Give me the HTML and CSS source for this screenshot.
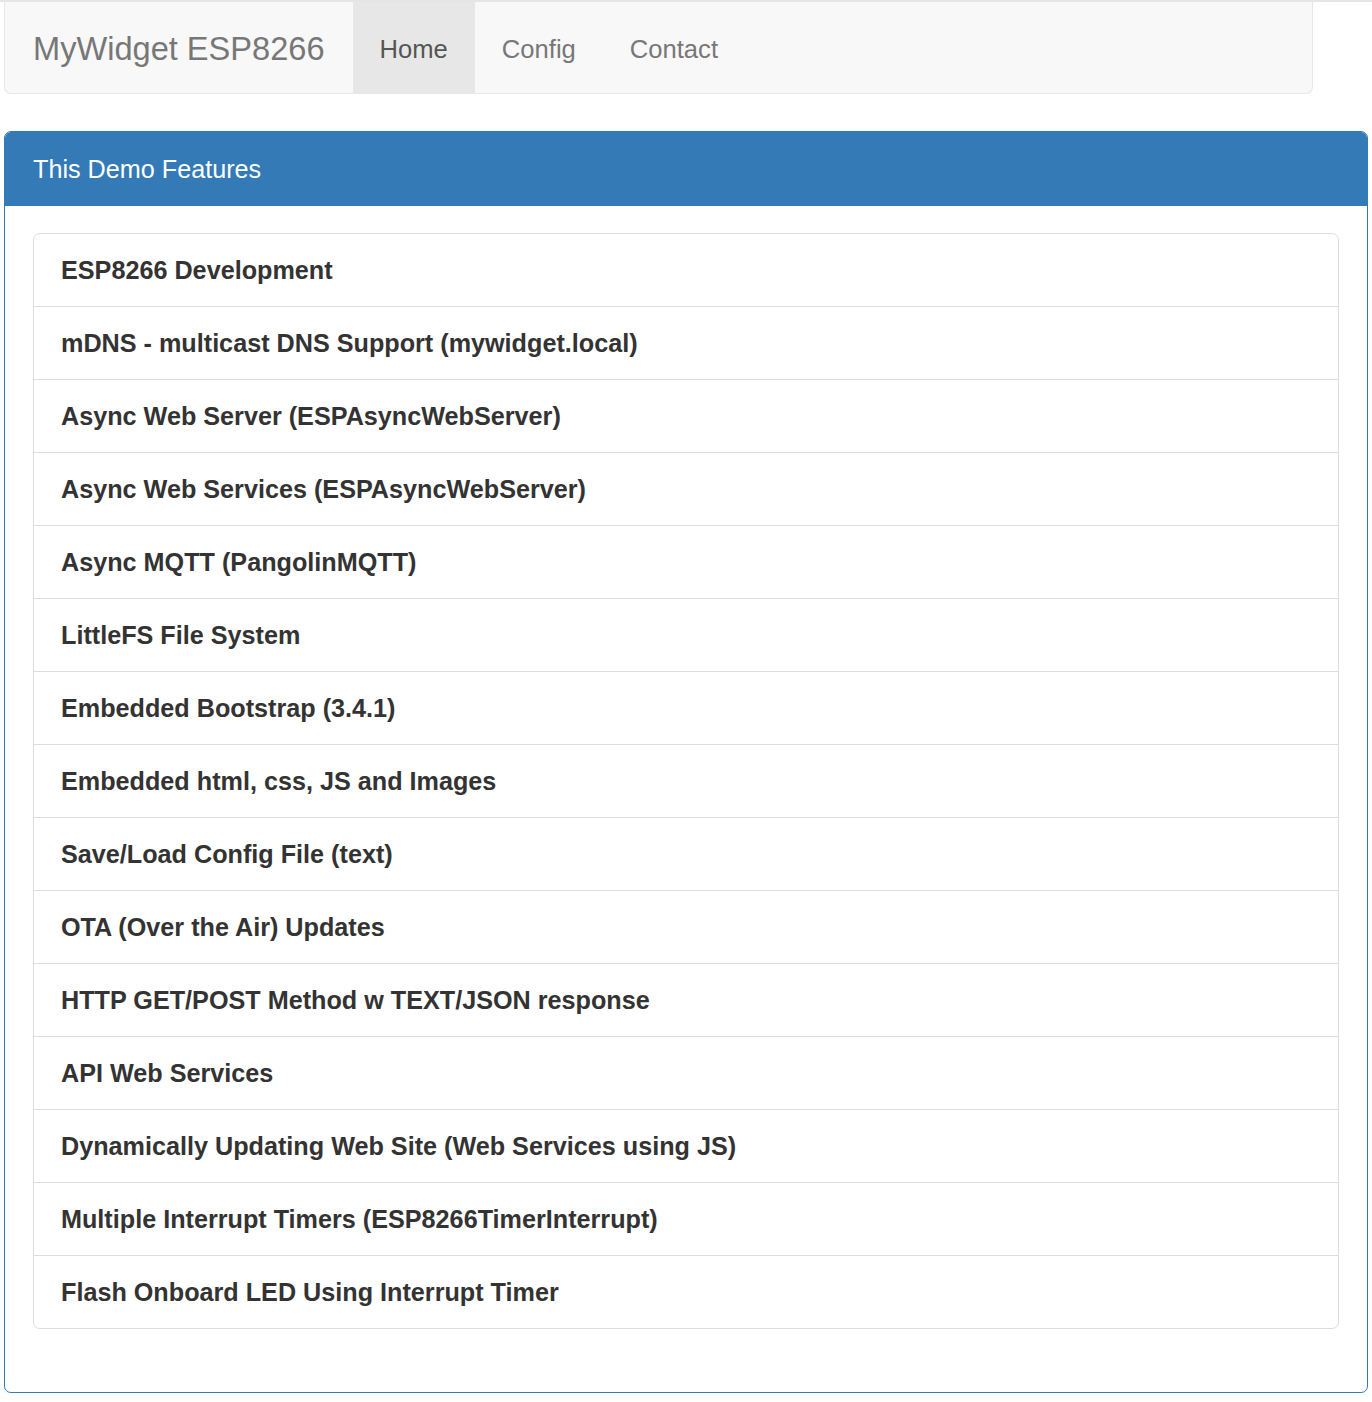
FILE: index.html
```html
<!DOCTYPE html>
<html lang="en">
<head>
<meta charset="utf-8">
<title>MyWidget ESP8266</title>
<link rel="stylesheet" href="styles.css">
</head>
<body>
<div class="topline"></div>
<div class="page">
  <nav class="navbar">
    <a class="brand" href="#">MyWidget ESP8266</a>
    <ul class="nav">
      <li class="active"><a href="#">Home</a></li>
      <li><a href="#">Config</a></li>
      <li><a href="#">Contact</a></li>
    </ul>
  </nav>
  <div class="panel">
    <div class="panel-heading">This Demo Features</div>
    <div class="panel-body">
      <ul class="list-group">
        <li class="list-item">ESP8266 Development</li>
        <li class="list-item">mDNS - multicast DNS Support (mywidget.local)</li>
        <li class="list-item">Async Web Server (ESPAsyncWebServer)</li>
        <li class="list-item">Async Web Services (ESPAsyncWebServer)</li>
        <li class="list-item">Async MQTT (PangolinMQTT)</li>
        <li class="list-item">LittleFS File System</li>
        <li class="list-item">Embedded Bootstrap (3.4.1)</li>
        <li class="list-item">Embedded html, css, JS and Images</li>
        <li class="list-item">Save/Load Config File (text)</li>
        <li class="list-item">OTA (Over the Air) Updates</li>
        <li class="list-item">HTTP GET/POST Method w TEXT/JSON response</li>
        <li class="list-item">API Web Services</li>
        <li class="list-item">Dynamically Updating Web Site (Web Services using JS)</li>
        <li class="list-item">Multiple Interrupt Timers (ESP8266TimerInterrupt)</li>
        <li class="list-item">Flash Onboard LED Using Interrupt Timer</li>
      </ul>
    </div>
  </div>
</div>
</body>
</html>
```
FILE: styles.css
```css
* { box-sizing: border-box; }
html, body { margin: 0; padding: 0; background: #fff; }
body {
  font-family: "Liberation Sans", Arial, Helvetica, sans-serif;
  font-size: 25.2px;
  line-height: 36px;
  color: #333;
}
.topline { height: 2px; background: #e5e5e5; }
.page { padding: 0 4px; }
.navbar {
  display: flex;
  align-items: stretch;
  height: 92px;
  margin-right: 55px;
  background: #f8f8f8;
  border: 1px solid #e7e7e7;
  border-top: none;
  border-radius: 0 0 7px 7px;
  margin-bottom: 37px;
}
.brand {
  display: block;
  padding: 29px 28px 26px;
  font-size: 32.6px;
  line-height: 36px;
  color: #777;
  text-decoration: none;
}
.nav {
  display: flex;
  list-style: none;
  margin: 0;
  padding: 0;
}
.nav li a {
  display: block;
  padding: 29px 27px 26px;
  font-size: 25.6px;
  line-height: 36px;
  color: #777;
  text-decoration: none;
}
.nav li.active a {
  background: #e7e7e7;
  color: #555;
}
.panel {
  border: 1px solid #337ab7;
  border-radius: 7px;
  background: #fff;
  box-shadow: 0 2px 2px rgba(0,0,0,0.04);
}
.panel-heading {
  background: #337ab7;
  color: #fff;
  padding: 19px 28px 18px;
  line-height: 36px;
  border-bottom: 1px solid #337ab7;
  border-radius: 6px 6px 0 0;
}
.panel-body { padding: 27px 28px; }
.list-group {
  list-style: none;
  margin: 0 0 36px 0;
  padding: 0;
}
.list-item {
  padding: 18px 27px;
  border: 1px solid #ddd;
  margin-bottom: -1px;
  font-weight: bold;
  line-height: 36px;
  background: #fff;
}
.list-item:first-child { border-radius: 7px 7px 0 0; }
.list-item:last-child { border-radius: 0 0 7px 7px; margin-bottom: 0; }
```
